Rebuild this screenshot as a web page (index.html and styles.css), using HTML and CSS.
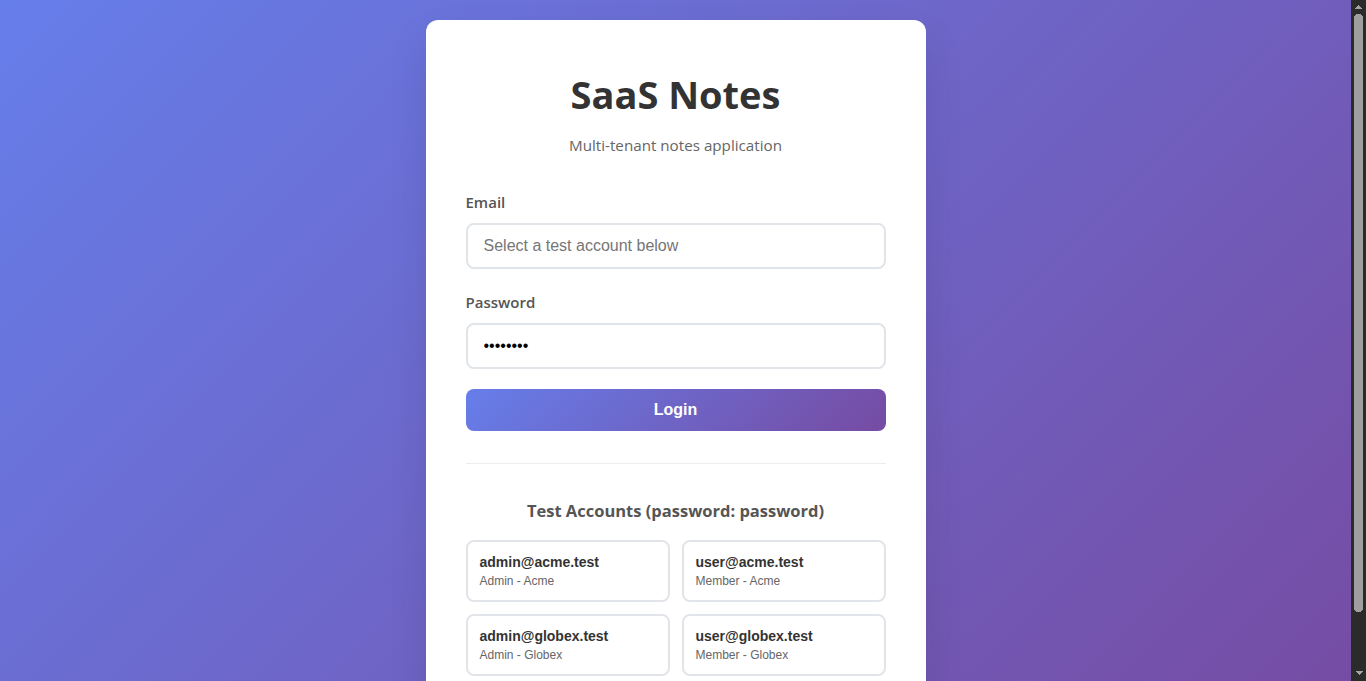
FILE: index.html
```html
<!DOCTYPE html>
<html lang="en">
<head>
<meta charset="utf-8">
<title>SaaS Notes</title>
<link rel="stylesheet" href="styles.css">
</head>
<body>
<main class="login-card">
  <h1 class="title">SaaS Notes</h1>
  <p class="subtitle">Multi-tenant notes application</p>
  <form class="login-form">
    <div class="field">
      <label class="label" for="email">Email</label>
      <input class="input" id="email" type="email" placeholder="Select a test account below">
    </div>
    <div class="field">
      <label class="label" for="password">Password</label>
      <input class="input" id="password" type="password" value="password">
    </div>
    <button class="login-btn" type="button">Login</button>
  </form>
  <section class="accounts">
    <h3 class="accounts-title">Test Accounts (password: password)</h3>
    <div class="accounts-grid">
      <button class="account" type="button"><span class="account-email">admin@acme.test</span><span class="account-role">Admin - Acme</span></button>
      <button class="account" type="button"><span class="account-email">user@acme.test</span><span class="account-role">Member - Acme</span></button>
      <button class="account" type="button"><span class="account-email">admin@globex.test</span><span class="account-role">Admin - Globex</span></button>
      <button class="account" type="button"><span class="account-email">user@globex.test</span><span class="account-role">Member - Globex</span></button>
    </div>
  </section>
</main>
</body>
</html>
```

FILE: styles.css
```css
* { box-sizing: border-box; }
/* the right 15px stand in for the browser's dark scrollbar */
html {
  padding-right: 15px;
  background-color: #2b2b2b;
  background-image:
    linear-gradient(to bottom right, transparent 50%, #a3a3a3 50%),
    linear-gradient(to bottom left, transparent 50%, #a3a3a3 50%),
    radial-gradient(circle at 4.5px 4.5px, #9f9f9f 4.5px, transparent 5px),
    linear-gradient(#9f9f9f, #9f9f9f),
    radial-gradient(circle at 4.5px 4.5px, #9f9f9f 4.5px, transparent 5px),
    linear-gradient(to top right, transparent 50%, #a3a3a3 50%),
    linear-gradient(to top left, transparent 50%, #a3a3a3 50%);
  background-size: 4px 4px, 4px 4px, 9px 9px, 9px 589px, 9px 9px, 4px 4px, 4px 4px;
  background-position:
    right 7.5px top 5px,
    right 3.5px top 5px,
    right 3px top 14px,
    right 3px top 18px,
    right 3px top 603px,
    right 7.5px top 671px,
    right 3.5px top 671px;
  background-repeat: no-repeat;
}
body {
  margin: 0;
  min-height: 100vh;
  padding: 20px;
  display: flex;
  justify-content: center;
  align-items: flex-start;
  background: linear-gradient(135deg, #667eea 0%, #764ba2 100%);
  font-family: "Segoe UI", "Open Sans", "Noto Sans", sans-serif;
}
.login-card {
  width: 500px;
  background: #fff;
  border-radius: 12px;
  padding: 40px;
  box-shadow: 0 20px 40px rgba(0,0,0,0.1);
}
.title {
  margin: 0 0 16px;
  padding-top: 10px;
  line-height: 48px;
  text-align: center;
  font-size: 38px;
  font-weight: 700;
  color: #333;
}
.subtitle {
  margin: 0 0 34px;
  line-height: 22px;
  text-align: center;
  font-size: 15.2px;
  color: #666;
}
.login-form { display: flex; flex-direction: column; gap: 20px; }
.field { display: flex; flex-direction: column; }
.field + .field { margin-top: 1px; }
.label {
  font-size: 15px;
  line-height: 25px;
  font-weight: 600;
  color: #555;
  margin-bottom: 8px;
}
.input {
  height: 46px;
  padding: 12px 16px;
  border: 2px solid #e1e5e9;
  border-radius: 8px;
  font-family: "Liberation Sans", Arial, sans-serif;
  font-size: 16px;
  color: #000;
}
.input::placeholder { color: #767676; }
.login-btn {
  height: 42px;
  border: none;
  border-radius: 8px;
  background: linear-gradient(135deg, #667eea 0%, #764ba2 100%);
  color: #fff;
  font-family: "Liberation Sans", Arial, sans-serif;
  font-size: 16px;
  font-weight: 700;
}
.accounts {
  margin-top: 32px;
  padding-top: 35px;
  border-top: 1px solid #eee;
}
.accounts-title {
  margin: 0 0 17px;
  line-height: 24px;
  text-align: center;
  font-size: 16.5px;
  font-weight: 700;
  color: #555;
}
.accounts-grid {
  display: grid;
  grid-template-columns: 1fr 1fr;
  gap: 12px;
}
.account {
  display: flex;
  flex-direction: column;
  align-items: flex-start;
  gap: 4px;
  height: 62px;
  padding: 12px;
  border: 2px solid #e1e5e9;
  border-radius: 8px;
  background: #fff;
  text-align: left;
  font-family: "Liberation Sans", Arial, sans-serif;
}
.account-email { font-size: 14px; font-weight: 700; color: #333; }
.account-role { font-size: 12px; color: #666; }
```
